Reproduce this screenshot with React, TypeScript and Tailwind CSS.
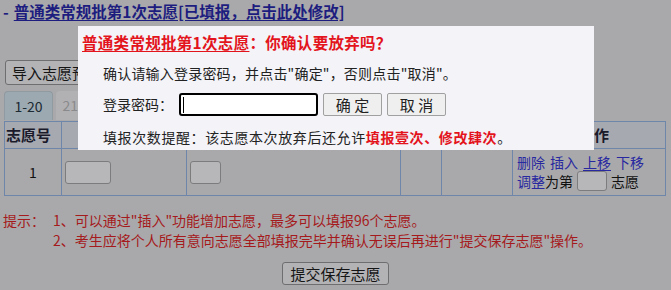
import React from "react";

const font = { fontFamily: '"Noto Sans CJK SC", "Noto Sans", sans-serif' };

export default function App() {
  return (
    <div
      className="relative w-[671px] h-[290px] overflow-hidden bg-[#a9a9ab] text-[#111]"
      style={font}
    >
      {/* top link line */}
      <div className="pl-[3px] pt-[2px] h-[20px] flex items-center text-[15.5px] font-bold leading-[20px] text-[#1d1d7f]">
        <span className="mr-[5px]">-</span>
        <span className="underline underline-offset-2">普通类常规批第1次志愿[已填报，点击此处修改]</span>
      </div>

      {/* import button */}
      <div className="mt-[40px] ml-[5px] flex">
        <button className="h-[25px] px-[6px] bg-[#b3b3b5] border border-[#6e6e70] rounded-[3px] text-[15px] leading-[20px] text-[#151515]">
          导入志愿预填表
        </button>
      </div>

      {/* tabs */}
      <div className="mt-[6px] ml-[4px] flex gap-[3px] h-[29px]">
        <div className="w-[49px] h-full rounded-t-[4px] bg-[#9da9b0] border border-[#8f9aa1] border-b-0 flex items-center justify-center text-[14px] text-[#1b2a33]">
          1-20
        </div>
        <div className="w-[49px] h-full rounded-t-[4px] bg-[#b1b1b3] flex items-center justify-center text-[14px] text-[#8a8a8c]">
          21-40
        </div>
      </div>

      {/* table */}
      <div className="ml-[4px] mt-[1px] w-[661px]">
        <table className="border-collapse w-[661px] table-fixed">
          <colgroup>
            <col className="w-[57px]" />
            <col className="w-[125px]" />
            <col className="w-[214px]" />
            <col className="w-[41px]" />
            <col className="w-[71px]" />
            <col className="w-[153px]" />
          </colgroup>
          <thead>
            <tr className="h-[27px] bg-[#a7a9b1]">
              <th className="border border-[#6e86aa] text-[15px] font-bold text-[#1a1a2a] text-left pl-[1px]">志愿号</th>
              <th className="border border-[#6e86aa]" />
              <th className="border border-[#6e86aa]" />
              <th className="border border-[#6e86aa]" />
              <th className="border border-[#6e86aa]" />
              <th className="border border-[#6e86aa] text-[15px] font-bold pl-[10px] text-[#1a1a2a]">操作</th>
            </tr>
          </thead>
          <tbody>
            <tr className="h-[47px]">
              <td className="border border-[#6e86aa] text-center text-[14px]">1</td>
              <td className="border border-[#6e86aa] pl-[3px]">
                <div className="w-[46px] h-[23px] bg-[#b7b7b9] border border-[#7c7c7e] rounded-[3px]" />
              </td>
              <td className="border border-[#6e86aa] pl-[3px]">
                <div className="w-[31px] h-[23px] bg-[#b7b7b9] border border-[#7c7c7e] rounded-[3px]" />
              </td>
              <td className="border border-[#6e86aa]" />
              <td className="border border-[#6e86aa]" />
              <td className="border border-[#6e86aa] pl-[4px] text-[14px] leading-[18px]">
                <div className="flex gap-[5px] text-[#2828a0]">
                  <span>删除</span>
                  <span>插入</span>
                  <span className="underline underline-offset-2">上移</span>
                  <span>下移</span>
                </div>
                <div className="flex items-center">
                  <span className="text-[#2828a0]">调整</span>
                  <span>为第</span>
                  <span className="ml-[4px] mr-[4px] w-[30px] h-[20px] bg-[#b7b7b9] border border-[#7c7c7e] rounded-[3px]" />
                  <span>志愿</span>
                </div>
              </td>
            </tr>
          </tbody>
        </table>
      </div>

      {/* hints */}
      <div className="mt-[14px] pl-[3px] flex text-[14px] leading-[20px] text-[#a51a1c]">
        <span className="w-[50px] shrink-0">提示：</span>
        <div className="flex flex-col">
          <span>1、可以通过"插入"功能增加志愿，最多可以填报96个志愿。</span>
          <span>2、考生应将个人所有意向志愿全部填报完毕并确认无误后再进行"提交保存志愿"操作。</span>
        </div>
      </div>

      {/* submit */}
      <div className="mt-[12px] flex justify-center">
        <button className="w-[107px] h-[23px] bg-[#b3b3b5] border border-[#6e6e70] rounded-[3px] text-[15px] leading-[20px] text-[#151515]">
          提交保存志愿
        </button>
      </div>

      {/* dialog */}
      <div className="absolute left-[78px] top-[26px] w-[516px] h-[124px] bg-[#f3f3f8] pt-[6px] text-[#222]">
        <div className="pl-[4px] h-[20px] leading-[20px] text-[15.5px] font-bold tracking-[0.3px] text-[#e3141c]">
          <span className="underline underline-offset-2">普通类常规批第1次志愿</span>
          <span>：你确认要放弃吗？</span>
        </div>
        <div className="mt-[11px] pl-[25px] h-[20px] leading-[20px] text-[14px] tracking-[0.2px]">
          确认请输入登录密码，并点击"确定"，否则点击"取消"。
        </div>
        <div className="mt-[10px] pl-[25px] h-[23px] flex items-center text-[14px]">
          <span className="w-[76px]">登录密码：</span>
          <div className="w-[139px] h-[23px] border-2 border-black rounded-[3px] bg-white flex items-center pl-[2px]">
            <span className="w-[1px] h-[16px] bg-black" />
          </div>
          <button className="ml-[5px] w-[59px] h-[23px] bg-[#efefef] border border-[#a0a0a0] rounded-[2px] text-[15px] leading-[20px]">
            确 定
          </button>
          <button className="ml-[5px] w-[59px] h-[23px] bg-[#efefef] border border-[#a0a0a0] rounded-[2px] text-[15px] leading-[20px]">
            取 消
          </button>
        </div>
        <div className="mt-[11px] pl-[25px] h-[20px] leading-[20px] text-[14px] tracking-[0.6px]">
          填报次数提醒：该志愿本次放弃后还允许
          <span className="font-bold text-[#e3141c]">填报壹次、修改肆次</span>。
        </div>
      </div>
    </div>
  );
}
